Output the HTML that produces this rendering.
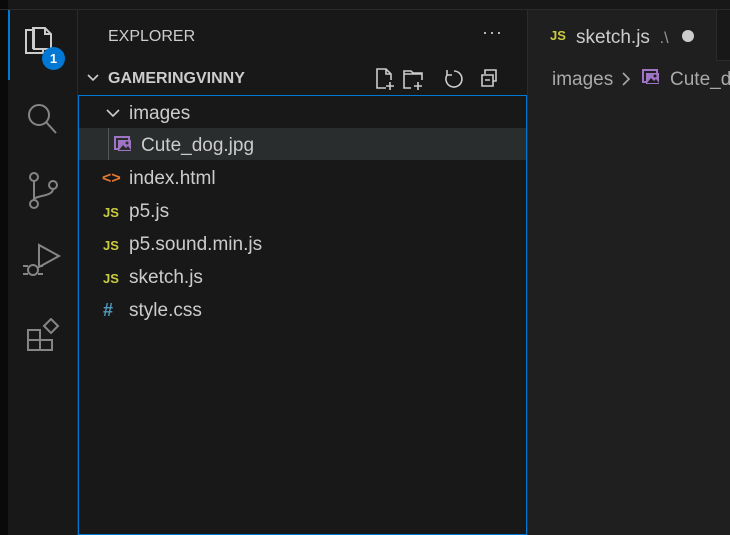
<!DOCTYPE html>
<html><head><style>
*{margin:0;padding:0;box-sizing:border-box}
body{width:730px;height:535px;background:#181818;position:relative;overflow:hidden;font-family:"Liberation Sans",sans-serif;color:#ccc}
.abs{position:absolute}
.row{position:absolute;left:79px;width:447px;height:33px;font-size:19px;line-height:35px;color:#ccc}
.row .t{position:absolute;left:50px}
.js{position:absolute;left:24px;font-weight:bold;font-size:13px;color:#cbcb41;top:1px}
</style></head><body>
<div class="abs" style="left:0;top:0;width:8px;height:535px;background:#0a0a0a"></div>
<div class="abs" style="left:0;top:9px;width:730px;height:1px;background:#2b2b2b"></div>
<div class="abs" style="left:77px;top:10px;width:1px;height:525px;background:#2b2b2b"></div>
<div class="abs" style="left:527px;top:10px;width:1px;height:525px;background:#2b2b2b"></div>
<div class="abs" style="left:8px;top:10px;width:2px;height:70px;background:#0078d4"></div>
<svg class="abs" style="left:20px;top:20px" width="50" height="290" viewBox="0 0 50 290" fill="none" stroke="#ccc" stroke-width="2">
<path d="M13 10H6v23h17v-4 M13 29V8h11l1 0 M13 8V8h0 M14 29V8h11l6 6v15z M25 8v6h6"/>
<g stroke="#858585">
<circle cx="19" cy="95" r="10"/><path d="M26 102l10 11"/>
<circle cx="14" cy="157" r="4"/><circle cx="14" cy="184" r="4"/><circle cx="33" cy="165" r="4"/><path d="M14 161v19 M33 169c0 8-19 6-19 11"/>
<path d="M19 225v22l20-11z"/><circle cx="13" cy="250" r="5"/><path d="M3 246h5 M3 254h5 M18 246h5 M18 254h5"/>
</g>
</svg>
<svg class="abs" style="left:26px;top:318px" width="34" height="34" fill="none" stroke="#858585" stroke-width="2"><path d="M2 12h12v20H2z M2 22h24v10H14 M18 8l7-7 7 7-7 7z"/></svg>
<div class="abs" style="left:42px;top:47px;width:23px;height:23px;border-radius:50%;background:#0078d4;color:#fff;font-size:13px;font-weight:bold;text-align:center;line-height:23px">1</div>
<div class="abs" style="left:108px;top:28px;font-size:16px;color:#ccc">EXPLORER</div>
<div class="abs" style="left:482px;top:22px;font-size:18px;color:#ccc;letter-spacing:1px">···</div>
<svg class="abs" style="left:85px;top:70px" width="16" height="16" fill="none" stroke="#ccc" stroke-width="1.6"><path d="M3 5l5 5 5-5"/></svg>
<div class="abs" style="left:108px;top:70px;font-size:16px;font-weight:bold;color:#ccc">GAMERINGVINNY</div>
<svg class="abs" style="left:374px;top:66px" width="134" height="26" fill="none" stroke="#ccc" stroke-width="1.6">
<path d="M12 22H3V3h9l5 5v6 M12 3v5h5 M16 16v8 M12 20h8"/>
<path d="M37 22h-7V5h7l2 2h9v7 M30 8h18 M44 16v8 M40 20h8"/>
<path d="M80 5a8 8 0 1 1-7 4 M73 4v5h5"/>
<path d="M111 8V4h11v11h-3 M108 9h11v11h-11z M111 14h5"/>
</svg>
<div class="abs" style="left:78px;top:95px;width:449px;height:440px;border:1px solid #0078d4"></div>
<div class="abs" style="left:79px;top:128px;width:447px;height:32px;background:#2a2d2e"></div>
<div class="abs" style="left:108px;top:128px;width:1px;height:32px;background:#585858"></div>
<div class="row" style="top:96px"><svg class="abs" style="left:26px;top:10px" width="16" height="14" fill="none" stroke="#ccc" stroke-width="1.6"><path d="M2 4l6 6 6-6"/></svg><span class="t">images</span></div>
<div class="row" style="top:128px"><svg class="abs" style="left:35px;top:8px" width="18" height="16"><rect x="1" y="1" width="14" height="12" fill="none" stroke="#a074c4" stroke-width="2"/><rect x="4" y="4" width="13" height="11" fill="#a074c4"/><circle cx="13" cy="7" r="1.5" fill="#2a2d2e"/><path d="M5 14l4-5 3 3 2-2 3 4z" fill="#2a2d2e"/></svg><span class="t" style="left:62px">Cute_dog.jpg</span></div>
<div class="row" style="top:161px"><span class="abs" style="left:23px;color:#e37933;font-size:16px;font-weight:bold">&lt;&gt;</span><span class="t">index.html</span></div>
<div class="row" style="top:194px"><span class="js">JS</span><span class="t">p5.js</span></div>
<div class="row" style="top:227px"><span class="js">JS</span><span class="t">p5.sound.min.js</span></div>
<div class="row" style="top:260px"><span class="js">JS</span><span class="t">sketch.js</span></div>
<div class="row" style="top:293px"><span class="abs" style="left:24px;color:#519aba;font-weight:bold;font-size:18px">#</span><span class="t">style.css</span></div>
<div class="abs" style="left:528px;top:10px;width:202px;height:525px;overflow:hidden">
<div class="abs" style="left:0;top:51px;width:202px;height:474px;background:#1f1f1f"></div>
<div class="abs" style="left:0;top:50px;width:202px;height:1px;background:#2b2b2b"></div>
<div class="abs" style="left:0;top:0;width:188px;height:51px;background:#1f1f1f"></div>
<div class="abs" style="left:188px;top:0;width:1px;height:51px;background:#2b2b2b"></div>
<div class="abs" style="left:22px;top:18px;font-size:13px;font-weight:bold;color:#cbcb41">JS</div>
<div class="abs" style="left:48px;top:17px;font-size:19px;color:#ccc;white-space:nowrap">sketch.js <span style="font-size:16px;color:#999">&nbsp;.\</span></div>
<div class="abs" style="left:154px;top:20px;width:12px;height:12px;border-radius:50%;background:#ccc"></div>
<div class="abs" style="left:24px;top:59px;font-size:19px;color:#a9a9a9;white-space:nowrap">images</div>
<svg class="abs" style="left:92px;top:61px" width="12" height="16" fill="none" stroke="#a9a9a9" stroke-width="1.6"><path d="M3 2l6 6-6 6"/></svg>
<svg class="abs" style="left:114px;top:59px" width="20" height="17"><rect x="1" y="1" width="14" height="12" fill="none" stroke="#a074c4" stroke-width="2"/><rect x="4" y="4" width="13" height="11" fill="#a074c4"/><circle cx="13" cy="7" r="1.5" fill="#1f1f1f"/><path d="M5 14l4-5 3 3 2-2 3 4z" fill="#1f1f1f"/></svg>
<div class="abs" style="left:142px;top:59px;font-size:19px;color:#a9a9a9;white-space:nowrap">Cute_dog.jpg</div>
</div>
</body></html>
